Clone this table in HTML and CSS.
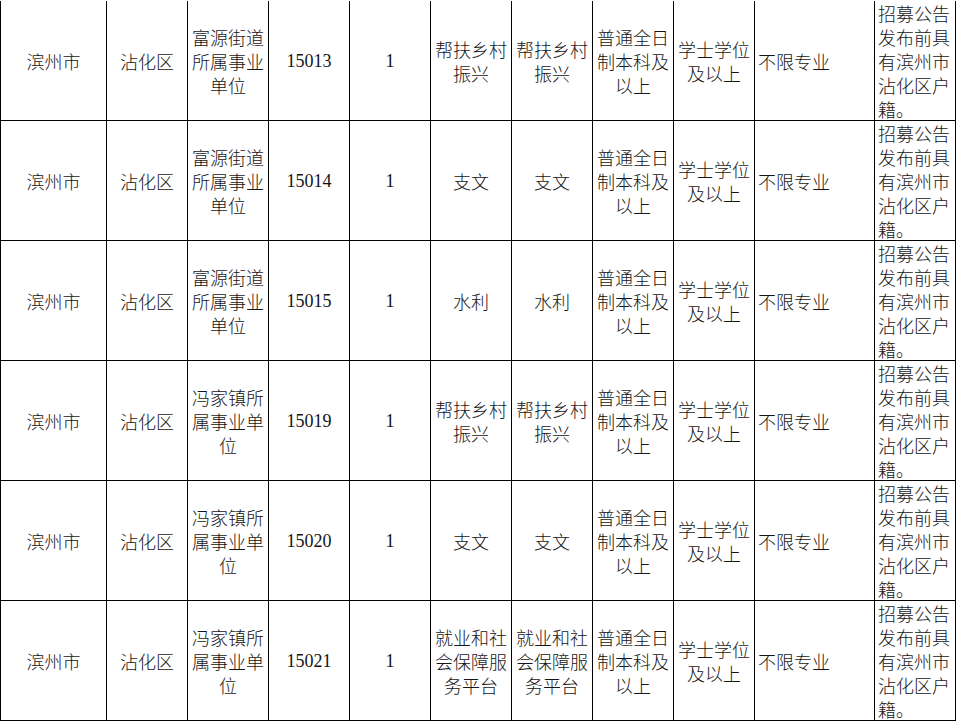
FILE: index.html
```html
<!DOCTYPE html>
<html lang="zh-CN">
<head>
<meta charset="utf-8">
<title>岗位表</title>
<link rel="stylesheet" href="styles.css">
</head>
<body>
<div class="sheet">
  <div class="cell">滨州市</div>
  <div class="cell">沾化区</div>
  <div class="cell">富源街道所属事业单位</div>
  <div class="cell num">15013</div>
  <div class="cell num">1</div>
  <div class="cell">帮扶乡村振兴</div>
  <div class="cell">帮扶乡村振兴</div>
  <div class="cell">普通全日制本科及以上</div>
  <div class="cell">学士学位及以上</div>
  <div class="cell left">不限专业</div>
  <div class="cell left">招募公告发布前具有滨州市沾化区户籍。</div>

  <div class="cell">滨州市</div>
  <div class="cell">沾化区</div>
  <div class="cell">富源街道所属事业单位</div>
  <div class="cell num">15014</div>
  <div class="cell num">1</div>
  <div class="cell">支文</div>
  <div class="cell">支文</div>
  <div class="cell">普通全日制本科及以上</div>
  <div class="cell">学士学位及以上</div>
  <div class="cell left">不限专业</div>
  <div class="cell left">招募公告发布前具有滨州市沾化区户籍。</div>

  <div class="cell">滨州市</div>
  <div class="cell">沾化区</div>
  <div class="cell">富源街道所属事业单位</div>
  <div class="cell num">15015</div>
  <div class="cell num">1</div>
  <div class="cell">水利</div>
  <div class="cell">水利</div>
  <div class="cell">普通全日制本科及以上</div>
  <div class="cell">学士学位及以上</div>
  <div class="cell left">不限专业</div>
  <div class="cell left">招募公告发布前具有滨州市沾化区户籍。</div>

  <div class="cell">滨州市</div>
  <div class="cell">沾化区</div>
  <div class="cell">冯家镇所属事业单位</div>
  <div class="cell num">15019</div>
  <div class="cell num">1</div>
  <div class="cell">帮扶乡村振兴</div>
  <div class="cell">帮扶乡村振兴</div>
  <div class="cell">普通全日制本科及以上</div>
  <div class="cell">学士学位及以上</div>
  <div class="cell left">不限专业</div>
  <div class="cell left">招募公告发布前具有滨州市沾化区户籍。</div>

  <div class="cell">滨州市</div>
  <div class="cell">沾化区</div>
  <div class="cell">冯家镇所属事业单位</div>
  <div class="cell num">15020</div>
  <div class="cell num">1</div>
  <div class="cell">支文</div>
  <div class="cell">支文</div>
  <div class="cell">普通全日制本科及以上</div>
  <div class="cell">学士学位及以上</div>
  <div class="cell left">不限专业</div>
  <div class="cell left">招募公告发布前具有滨州市沾化区户籍。</div>

  <div class="cell">滨州市</div>
  <div class="cell">沾化区</div>
  <div class="cell">冯家镇所属事业单位</div>
  <div class="cell num">15021</div>
  <div class="cell num">1</div>
  <div class="cell">就业和社会保障服务平台</div>
  <div class="cell">就业和社会保障服务平台</div>
  <div class="cell">普通全日制本科及以上</div>
  <div class="cell">学士学位及以上</div>
  <div class="cell left">不限专业</div>
  <div class="cell left">招募公告发布前具有滨州市沾化区户籍。</div>
</div>
</body>
</html>
```

FILE: styles.css
```css
html, body {
  margin: 0;
  padding: 0;
  background: #fff;
}

body {
  font-family: "Noto Sans CJK SC", "Noto Sans", sans-serif;
  font-weight: 300;
  font-size: 18px;
  line-height: 24px;
  color: #151515;
}

.sheet {
  display: grid;
  grid-template-columns: 106px repeat(8, 81px) 120px 81px;
  grid-auto-rows: 120px;
  width: max-content;
  margin-top: 1px;
  border-left: 1px solid #000;
}

.cell {
  box-sizing: border-box;
  border-right: 1px solid #000;
  border-bottom: 1px solid #000;
  padding: 1px 3px 0;
  display: flex;
  align-items: center;
  justify-content: center;
  text-align: center;
  overflow: visible;
}

.cell.left {
  justify-content: flex-start;
  text-align: left;
}

.cell.num {
  font-family: "Liberation Serif", "Times New Roman", serif;
  font-weight: 400;
}
```
